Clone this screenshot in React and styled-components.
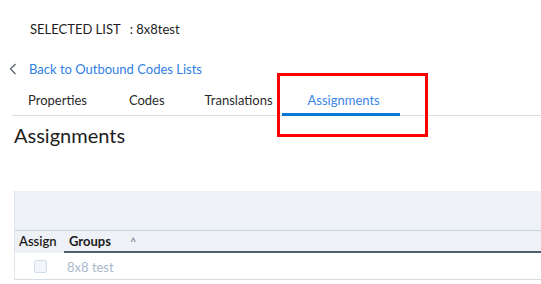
import React from "react";
import styled, { createGlobalStyle } from "styled-components";

const GlobalStyle = createGlobalStyle`
  body {
    margin: 0;
    background: #fff;
    font-family: "Lato", "Open Sans", sans-serif;
    color: #222;
  }
`;

const Page = styled.div`
  position: relative;
  width: 541px;
  height: 284px;
  overflow: hidden;
`;

const SelectedList = styled.div`
  padding: 21px 0 0 30px;
  height: 20px;
  font-size: 13px;
  line-height: 16px;
  color: #1c1c1c;

  span {
    margin-left: 9px;
  }
`;

const BackRow = styled.a`
  display: flex;
  align-items: center;
  gap: 12px;
  margin: 20px 0 0 9px;
  height: 16px;
  font-size: 13px;
  color: #2f7fe6;
  text-decoration: none;

  svg {
    flex: none;
  }
`;

const Tabs = styled.nav`
  display: flex;
  margin: 11px 0 0 12px;
  height: 27px;
  border-bottom: 1px solid #d8dde4;
`;

const Tab = styled.div`
  position: relative;
  box-sizing: border-box;
  margin-left: ${p => p.ml}px;
  padding: 4px 0 0 ${p => (p.active ? 26 : 0)}px;
  width: ${p => (p.active ? "118px" : "auto")};
  font-size: 13px;
  line-height: 16px;
  color: ${p => (p.active ? "#3a86e8" : "#2a2a2a")};

  ${p =>
    p.active &&
    `&::after {
      content: "";
      position: absolute;
      left: 0;
      right: 0;
      bottom: -1px;
      height: 3px;
      background: #0a78d7;
    }`}
`;

const Heading = styled.h2`
  margin: 7px 0 0 14px;
  font-size: 20px;
  font-weight: 400;
  line-height: 24px;
  color: #1d1d1d;
`;

const Table = styled.div`
  margin: 44px 0 0 14px;
  border-left: 1px solid #dfe5ec;
`;

const Toolbar = styled.div`
  height: 39px;
  background: #eef2f7;
  border-bottom: 1px solid #c7d3df;
`;

const HeaderRow = styled.div`
  display: flex;
  align-items: center;
  height: 22px;
  background: #eef2f7;
  font-size: 13px;
  color: #1b1b1b;
`;

const HeadCell = styled.div`
  display: flex;
  align-items: center;
  height: 100%;
  padding-left: ${p => p.pad}px;
  width: ${p => (p.w ? `${p.w}px` : "auto")};
  flex: ${p => (p.w ? "none" : 1)};
  font-weight: ${p => (p.bold ? 700 : 600)};
  border-bottom: ${p => (p.line ? "2px solid #4d5d6c" : "2px solid transparent")};
  box-sizing: border-box;
`;

const Caret = styled.span`
  margin-left: 19px;
  font-size: 11px;
  color: #8a96a3;
`;

const Row = styled.div`
  display: flex;
  align-items: center;
  height: 25px;
  margin-top: 1px;
  border-bottom: 1px solid #d6dce3;
  font-size: 13px;
  color: #a9b9cb;
`;

const Check = styled.span`
  width: 11px;
  height: 11px;
  margin: 0 20px 0 19px;
  border: 1px solid #d3dbe4;
  border-radius: 2px;
  background: #f2f5f9;
`;

const Annotation = styled.div`
  position: absolute;
  left: 277px;
  top: 73px;
  width: 145px;
  height: 58px;
  border: 3px solid #ff0000;
`;

export default function App() {
  return (
    <Page>
      <GlobalStyle />
      <SelectedList>
        SELECTED LIST<span>: 8x8test</span>
      </SelectedList>
      <BackRow href="#">
        <svg width="8" height="12" viewBox="0 0 8 12">
          <path d="M6.5 1 L1.5 6 L6.5 11" fill="none" stroke="#5a6570" strokeWidth="1.3" />
        </svg>
        Back to Outbound Codes Lists
      </BackRow>
      <Tabs>
        <Tab ml={16}>Properties</Tab>
        <Tab ml={42}>Codes</Tab>
        <Tab ml={40}>Translations</Tab>
        <Tab ml={9} active>
          Assignments
        </Tab>
      </Tabs>
      <Heading>Assignments</Heading>
      <Table>
        <Toolbar />
        <HeaderRow>
          <HeadCell w={49} pad={4}>Assign</HeadCell>
          <HeadCell pad={5} bold line>
            Groups<Caret>^</Caret>
          </HeadCell>
        </HeaderRow>
        <Row>
          <Check />
          8x8 test
        </Row>
      </Table>
      <Annotation />
    </Page>
  );
}
